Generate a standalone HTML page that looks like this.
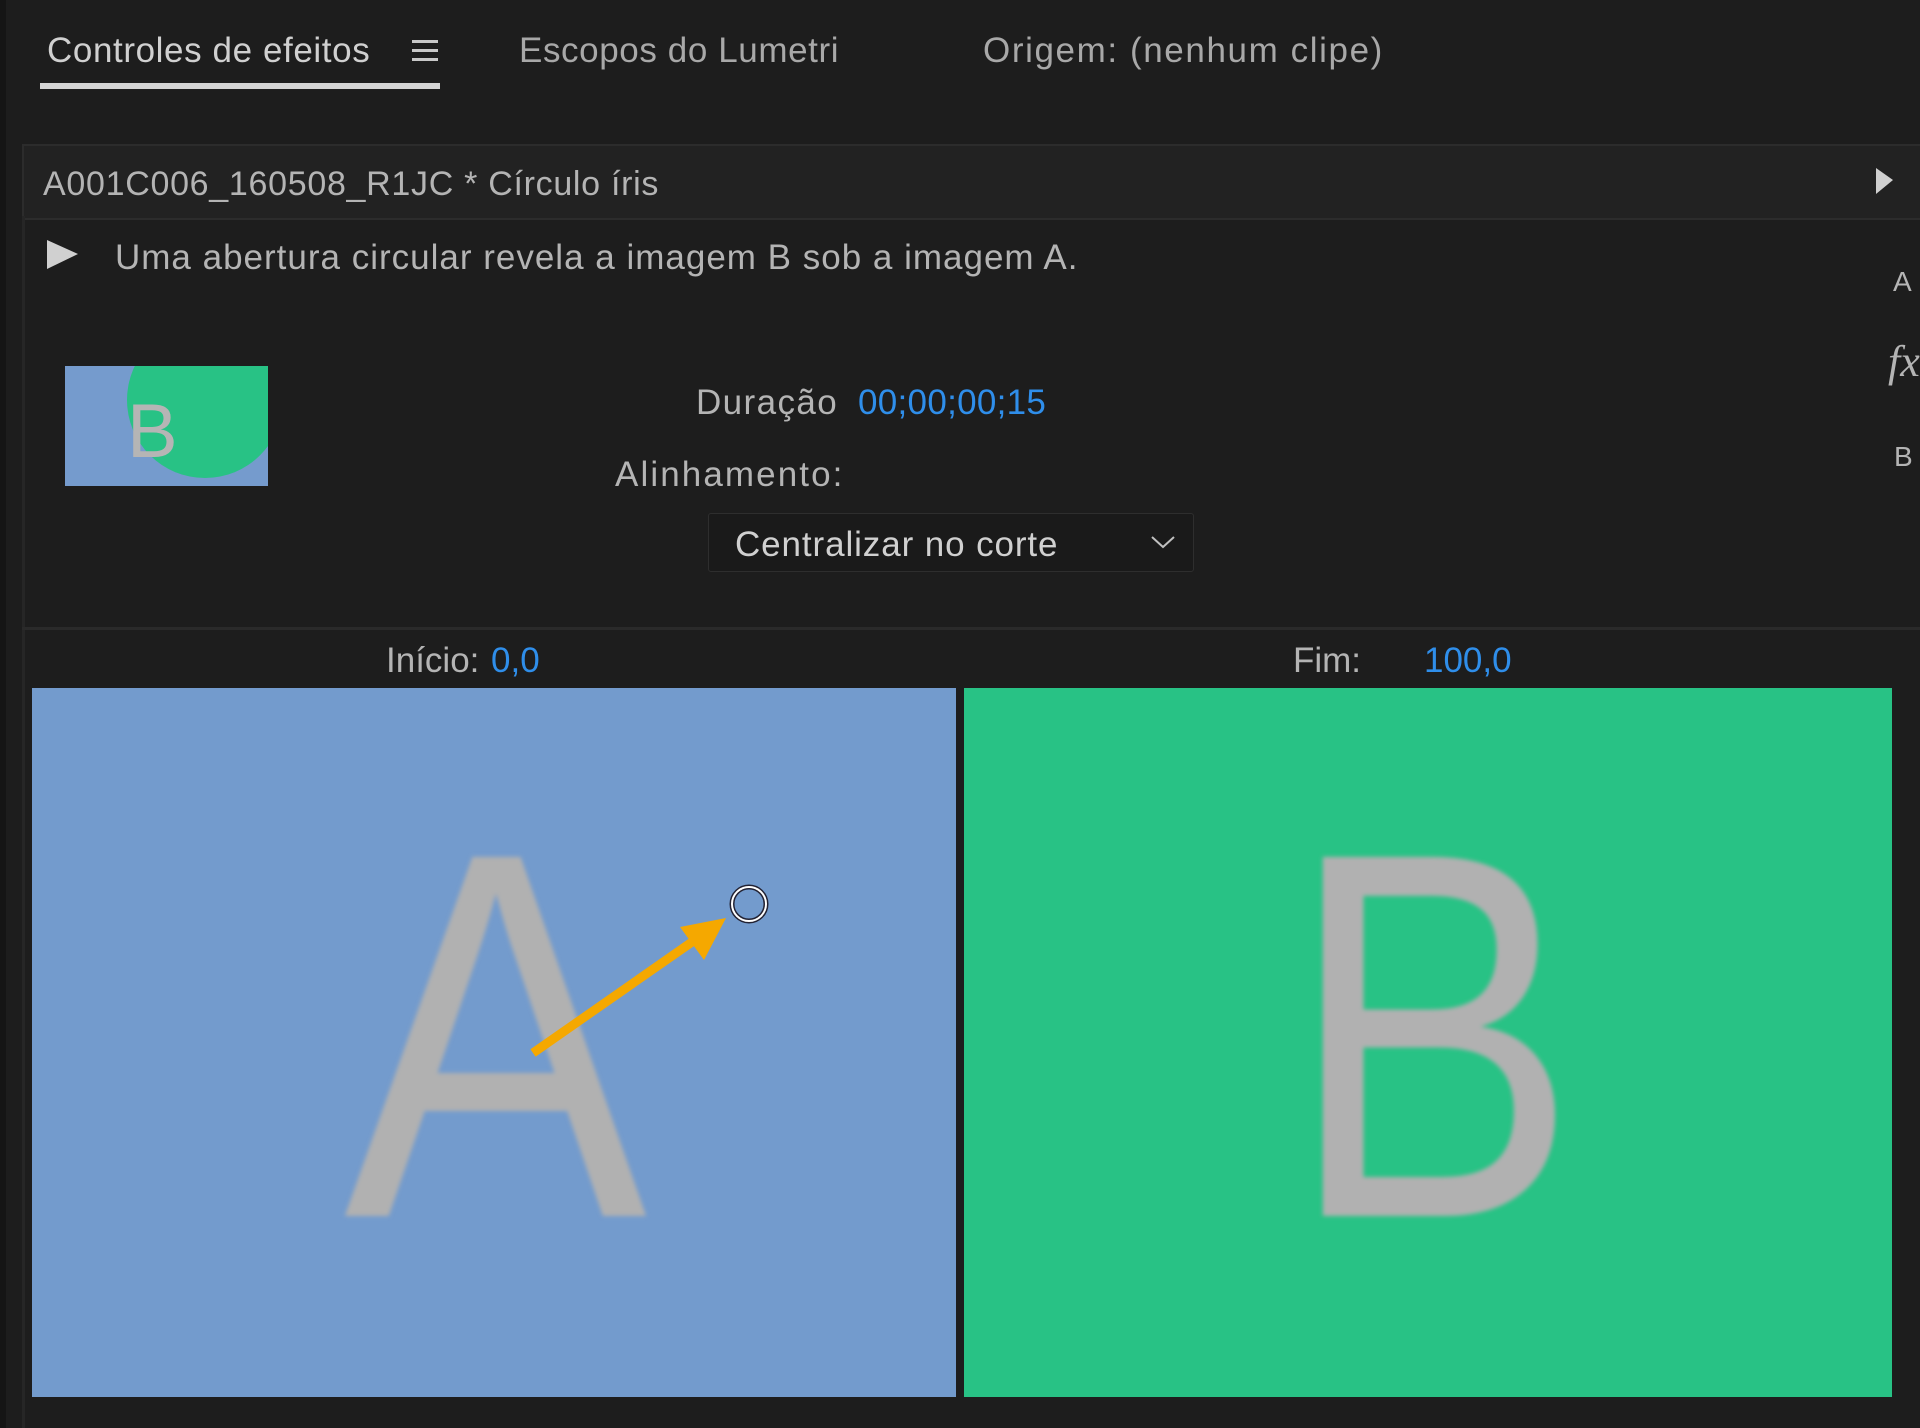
<!DOCTYPE html>
<html><head><meta charset="utf-8"><style>
body{margin:0;width:1920px;height:1428px;background:#1d1d1d;overflow:hidden;position:relative;font-family:"Liberation Sans",sans-serif;color:#b4b4b4}
.a{position:absolute;white-space:nowrap;line-height:1}
.t{font-size:35px;letter-spacing:0.6px}
.blue{color:#2f8eea}
</style></head><body>
<div class="a" style="left:0;top:0;width:6px;height:1428px;background:#151515"></div>
<div class="a t" style="left:47px;top:33px;color:#d0d0d0;letter-spacing:0.6px">Controles de efeitos</div>
<div class="a" style="left:412px;top:40px;width:26px;height:3px;background:#c8c8c8;box-shadow:0 9px 0 #c8c8c8,0 18px 0 #c8c8c8"></div>
<div class="a" style="left:40px;top:83px;width:400px;height:6px;background:#d4d4d4"></div>
<div class="a t" style="left:519px;top:33px;color:#a8a8a8;letter-spacing:0.6px">Escopos do Lumetri</div>
<div class="a t" style="left:983px;top:33px;color:#a8a8a8;letter-spacing:1.6px">Origem: (nenhum clipe)</div>

<div class="a" style="left:22px;top:144px;width:1898px;height:72px;background:#222;border-top:2px solid #2c2c2c;border-bottom:2px solid #2c2c2c;border-left:2px solid #2c2c2c"></div>
<div class="a" style="left:22px;top:216px;width:3px;height:1212px;background:#262626"></div>
<div class="a t" style="left:43px;top:167px;font-size:34px;letter-spacing:0.7px">A001C006_160508_R1JC * Círculo íris</div>
<svg class="a" style="left:1874px;top:166px" width="22" height="30"><polygon points="2,2 19,14 2,28" fill="#d0d0d0"/></svg>
<svg class="a" style="left:45px;top:238px" width="36" height="34"><polygon points="2,2 33,16 2,31" fill="#d0d0d0"/></svg>
<div class="a t" style="left:115px;top:240px;font-size:35px;letter-spacing:1.0px">Uma abertura circular revela a imagem B sob a imagem A.</div>
<div class="a" style="left:1893px;top:268px;font-size:28px">A</div>
<div class="a" style="left:1888px;top:340px;font-size:44px;font-style:italic;font-family:'Liberation Serif',serif">fx</div>
<div class="a" style="left:1894px;top:443px;font-size:28px">B</div>

<svg class="a" style="left:65px;top:366px" width="203" height="120"><rect width="203" height="120" fill="#759bcd"/><circle cx="140" cy="34" r="78" fill="#28c285"/><text x="62" y="91" font-family="Liberation Sans" font-size="76" fill="#b5b5b5">B</text></svg>

<div class="a t" style="left:696px;top:385px;letter-spacing:1.4px">Duração</div>
<div class="a t blue" style="left:858px;top:385px;letter-spacing:0.3px">00;00;00;15</div>
<div class="a t" style="left:615px;top:457px;letter-spacing:2.1px">Alinhamento:</div>
<div class="a" style="left:708px;top:513px;width:484px;height:57px;border:1px solid #2e2e2e;border-radius:3px;background:#1a1a1a"></div>
<div class="a t" style="left:735px;top:527px;color:#d0d0d0;letter-spacing:0.9px">Centralizar no corte</div>
<svg class="a" style="left:1150px;top:534px" width="26" height="16"><polyline points="2,3 13,13 24,3" fill="none" stroke="#c0c0c0" stroke-width="2"/></svg>
<div class="a" style="left:22px;top:627px;width:1898px;height:3px;background:#2a2a2a"></div>
<div class="a t" style="left:386px;top:643px;letter-spacing:0">Início:</div>
<div class="a t blue" style="left:491px;top:643px;letter-spacing:0">0,0</div>
<div class="a t" style="left:1293px;top:643px;letter-spacing:0">Fim:</div>
<div class="a t blue" style="left:1424px;top:643px;letter-spacing:0">100,0</div>

<svg class="a" style="left:32px;top:688px" width="1860" height="709">
<defs><filter id="b"><feGaussianBlur stdDeviation="2"/></filter></defs>
<rect x="0" y="0" width="924" height="709" fill="#739bcd"/>
<rect x="932" y="0" width="928" height="709" fill="#28c285"/>
<text x="312" y="528" font-family="Liberation Sans" font-size="522" fill="#b1b1b1" textLength="303" lengthAdjust="spacingAndGlyphs" filter="url(#b)">A</text>
<text x="1255" y="528" font-family="Liberation Sans" font-size="522" fill="#b1b1b1" textLength="291" lengthAdjust="spacingAndGlyphs" filter="url(#b)">B</text>
<line x1="501" y1="365" x2="670" y2="247" stroke="#f5a800" stroke-width="9"/>
<polygon points="694,230 648,239 672,272" fill="#f5a800"/>
<circle cx="717" cy="216" r="17" fill="none" stroke="#223" stroke-width="5"/>
<circle cx="717" cy="216" r="17" fill="none" stroke="#fff" stroke-width="2"/>
</svg>
</body></html>
